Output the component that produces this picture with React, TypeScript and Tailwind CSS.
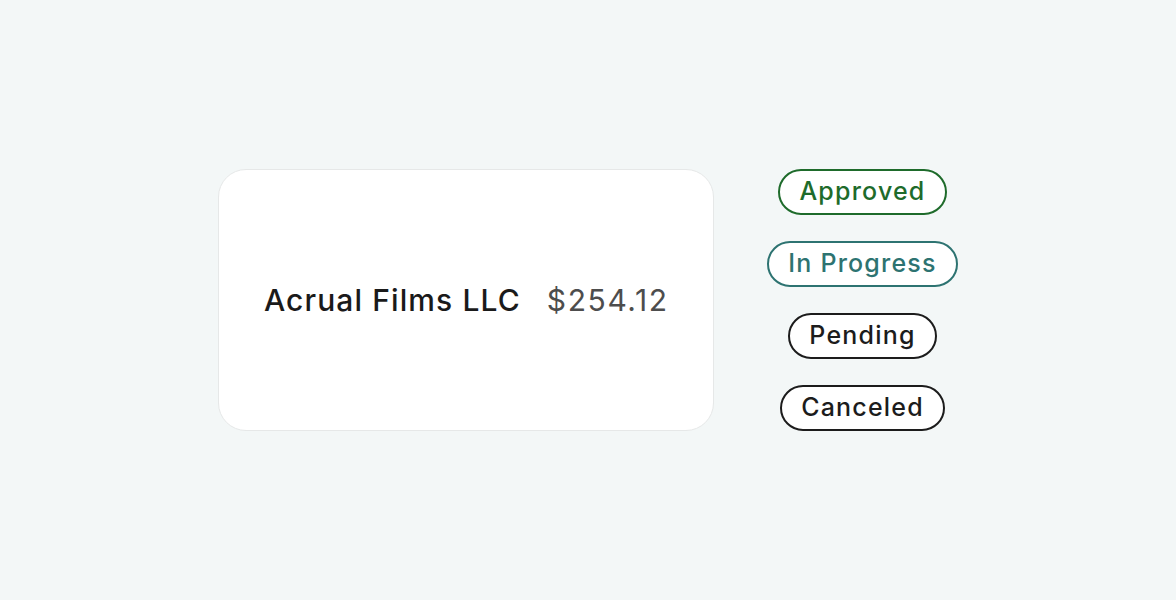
import React from "react";

const badges = [
  { label: "Approved", cls: "border-[#1e6b2b] text-[#1e6b2b]" },
  { label: "In Progress", cls: "border-[#2d7371] text-[#2d7371]" },
  { label: "Pending", cls: "border-[#1c1c1c] text-[#1c1c1c]" },
  { label: "Canceled", cls: "border-[#1c1c1c] text-[#1c1c1c]" },
];

export default function App() {
  return (
    <div
      className="w-[1176px] h-[600px] bg-[#f3f7f7] flex items-center justify-center gap-[53px]"
      style={{ fontFamily: "Inter, 'Noto Sans', sans-serif" }}
    >
      <div className="w-[496px] h-[262px] bg-white border border-[#e6e8e8] rounded-[28px] flex items-center justify-center gap-[26px]">
        <span className="text-[30px] font-medium text-[#1a1a1a] tracking-[1.1px]">Acrual Films LLC</span>
        <span className="text-[30px] font-normal text-[#4d4d4d] tracking-[1.6px]">$254.12</span>
      </div>
      <div className="flex flex-col items-center gap-[26px]">
        {badges.map((b) => (
          <div
            key={b.label}
            className={`h-[46px] px-[19px] flex items-center justify-center bg-white border-2 rounded-full text-[25px] font-medium tracking-[1.2px] ${b.cls}`}
          >
            {b.label}
          </div>
        ))}
      </div>
    </div>
  );
}
